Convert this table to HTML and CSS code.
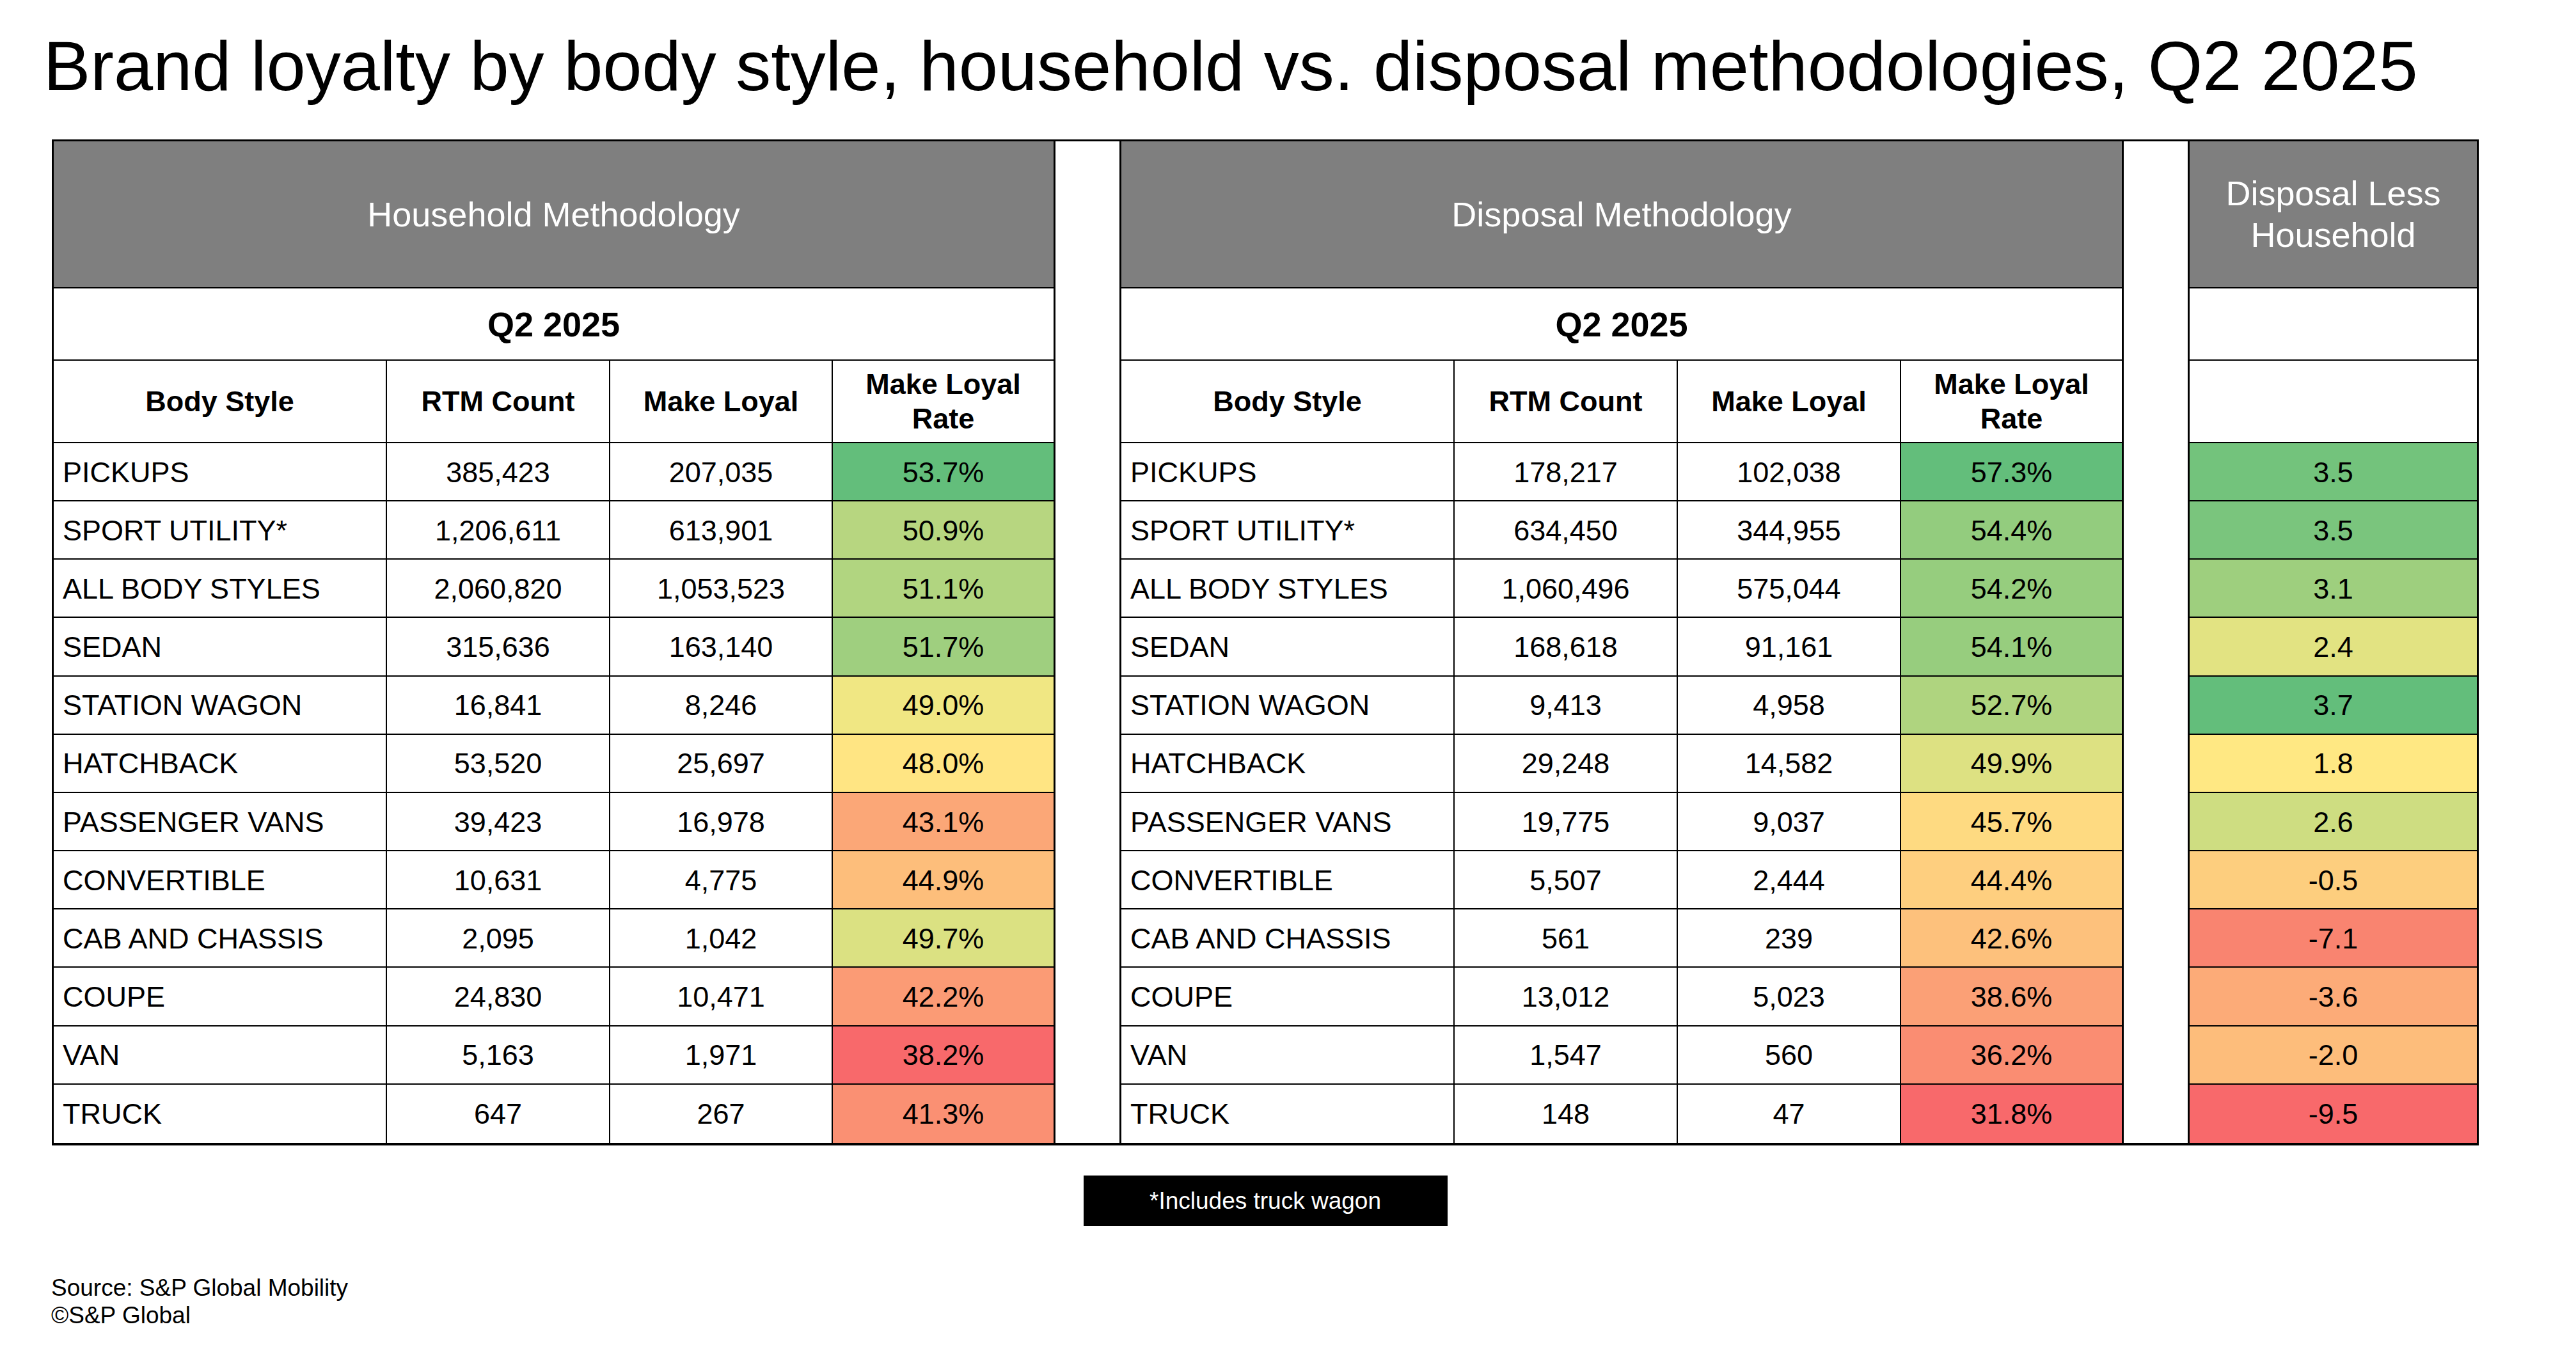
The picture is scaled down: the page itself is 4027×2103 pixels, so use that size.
FILE: index.html
```html
<!DOCTYPE html>
<html lang="en">
<head>
<meta charset="utf-8">
<title>Brand loyalty by body style</title>
<link rel="stylesheet" href="styles.css">
</head>
<body>
<h1 class="title">Brand loyalty by body style, household vs. disposal methodologies, Q2 2025</h1>
<div class="sheet">
  <div class="grid">
    <section class="panel panel-left">
      <div class="band">Household Methodology</div>
      <div class="period">Q2 2025</div>
      <div class="cols"><div class="c">Body Style</div><div class="c">RTM Count</div><div class="c">Make Loyal</div><div class="c">Make Loyal<br>Rate</div></div>
      <div class="rows">
        <div class="row"><div class="c name">PICKUPS</div><div class="c">385,423</div><div class="c">207,035</div><div class="c" style="background:#63be7b">53.7%</div></div>
        <div class="row"><div class="c name">SPORT UTILITY*</div><div class="c">1,206,611</div><div class="c">613,901</div><div class="c" style="background:#b7d680">50.9%</div></div>
        <div class="row"><div class="c name">ALL BODY STYLES</div><div class="c">2,060,820</div><div class="c">1,053,523</div><div class="c" style="background:#b1d580">51.1%</div></div>
        <div class="row"><div class="c name">SEDAN</div><div class="c">315,636</div><div class="c">163,140</div><div class="c" style="background:#9fcf7f">51.7%</div></div>
        <div class="row"><div class="c name">STATION WAGON</div><div class="c">16,841</div><div class="c">8,246</div><div class="c" style="background:#f0e783">49.0%</div></div>
        <div class="row"><div class="c name">HATCHBACK</div><div class="c">53,520</div><div class="c">25,697</div><div class="c" style="background:#ffe583">48.0%</div></div>
        <div class="row"><div class="c name">PASSENGER VANS</div><div class="c">39,423</div><div class="c">16,978</div><div class="c" style="background:#fba777">43.1%</div></div>
        <div class="row"><div class="c name">CONVERTIBLE</div><div class="c">10,631</div><div class="c">4,775</div><div class="c" style="background:#fdbe7b">44.9%</div></div>
        <div class="row"><div class="c name">CAB AND CHASSIS</div><div class="c">2,095</div><div class="c">1,042</div><div class="c" style="background:#dbe182">49.7%</div></div>
        <div class="row"><div class="c name">COUPE</div><div class="c">24,830</div><div class="c">10,471</div><div class="c" style="background:#fb9b75">42.2%</div></div>
        <div class="row"><div class="c name">VAN</div><div class="c">5,163</div><div class="c">1,971</div><div class="c" style="background:#f8696b">38.2%</div></div>
        <div class="row"><div class="c name">TRUCK</div><div class="c">647</div><div class="c">267</div><div class="c" style="background:#fa9073">41.3%</div></div>
      </div>
    </section>
    <div class="spacer"></div>
    <section class="panel panel-right">
      <div class="band">Disposal Methodology</div>
      <div class="period">Q2 2025</div>
      <div class="cols"><div class="c">Body Style</div><div class="c">RTM Count</div><div class="c">Make Loyal</div><div class="c">Make Loyal<br>Rate</div></div>
      <div class="rows">
        <div class="row"><div class="c name">PICKUPS</div><div class="c">178,217</div><div class="c">102,038</div><div class="c" style="background:#63be7b">57.3%</div></div>
        <div class="row"><div class="c name">SPORT UTILITY*</div><div class="c">634,450</div><div class="c">344,955</div><div class="c" style="background:#93cc7e">54.4%</div></div>
        <div class="row"><div class="c name">ALL BODY STYLES</div><div class="c">1,060,496</div><div class="c">575,044</div><div class="c" style="background:#96cd7e">54.2%</div></div>
        <div class="row"><div class="c name">SEDAN</div><div class="c">168,618</div><div class="c">91,161</div><div class="c" style="background:#97cd7e">54.1%</div></div>
        <div class="row"><div class="c name">STATION WAGON</div><div class="c">9,413</div><div class="c">4,958</div><div class="c" style="background:#afd47f">52.7%</div></div>
        <div class="row"><div class="c name">HATCHBACK</div><div class="c">29,248</div><div class="c">14,582</div><div class="c" style="background:#dde182">49.9%</div></div>
        <div class="row"><div class="c name">PASSENGER VANS</div><div class="c">19,775</div><div class="c">9,037</div><div class="c" style="background:#feda81">45.7%</div></div>
        <div class="row"><div class="c name">CONVERTIBLE</div><div class="c">5,507</div><div class="c">2,444</div><div class="c" style="background:#fecf7f">44.4%</div></div>
        <div class="row"><div class="c name">CAB AND CHASSIS</div><div class="c">561</div><div class="c">239</div><div class="c" style="background:#fdc17c">42.6%</div></div>
        <div class="row"><div class="c name">COUPE</div><div class="c">13,012</div><div class="c">5,023</div><div class="c" style="background:#fba076">38.6%</div></div>
        <div class="row"><div class="c name">VAN</div><div class="c">1,547</div><div class="c">560</div><div class="c" style="background:#fa8d72">36.2%</div></div>
        <div class="row"><div class="c name">TRUCK</div><div class="c">148</div><div class="c">47</div><div class="c" style="background:#f8696b">31.8%</div></div>
      </div>
    </section>
    <div class="spacer"></div>
    <section class="panel panel-diff">
      <div class="band">Disposal Less<br>Household</div>
      <div class="period"></div>
      <div class="cols"><div class="c"></div></div>
      <div class="rows">
        <div class="row"><div class="c" style="background:#73c37c">3.5</div></div>
        <div class="row"><div class="c" style="background:#7ac57d">3.5</div></div>
        <div class="row"><div class="c" style="background:#9ecf7e">3.1</div></div>
        <div class="row"><div class="c" style="background:#e2e382">2.4</div></div>
        <div class="row"><div class="c" style="background:#63be7b">3.7</div></div>
        <div class="row"><div class="c" style="background:#ffe883">1.8</div></div>
        <div class="row"><div class="c" style="background:#cedd81">2.6</div></div>
        <div class="row"><div class="c" style="background:#fdce7e">-0.5</div></div>
        <div class="row"><div class="c" style="background:#f98470">-7.1</div></div>
        <div class="row"><div class="c" style="background:#fcab78">-3.6</div></div>
        <div class="row"><div class="c" style="background:#fdbd7b">-2.0</div></div>
        <div class="row"><div class="c" style="background:#f8696b">-9.5</div></div>
      </div>
    </section>
  </div>
  <div class="note">*Includes truck wagon</div>
</div>
<footer class="source">Source: S&amp;P Global Mobility<br>©S&amp;P Global</footer>
</body>
</html>
```
FILE: styles.css
```css
* { box-sizing: border-box; }

body {
  margin: 0;
  background: #ffffff;
  color: #000000;
  font-family: "Liberation Sans", Arial, sans-serif;
}

.title {
  margin: 0;
  padding: 48px 0 0 68px;
  font-size: 110px;
  line-height: 110px;
  font-weight: 400;
  white-space: nowrap;
}

.sheet {
  width: 3794px;
  margin: 60px 0 0 81px;
}

.grid {
  display: flex;
  border: 3px solid #000;
  border-bottom-width: 4px;
}

.panel {
  display: flex;
  flex-direction: column;
  flex: none;
}

.panel-left { width: 1563px; }
.panel-right { width: 1564px; }
.panel-diff { width: 449px; }

.spacer {
  flex: none;
  width: 106px;
  background: #fff;
  border-left: 3px solid #000;
  border-right: 3px solid #000;
}

.band {
  height: 230px;
  background: #7f7f7f;
  color: #fff;
  border-bottom: 2px solid #000;
  display: flex;
  align-items: center;
  justify-content: center;
  text-align: center;
  font-size: 54px;
  line-height: 65px;
}

.period {
  height: 113px;
  border-bottom: 2px solid #000;
  display: flex;
  align-items: center;
  justify-content: center;
  font-size: 54px;
  font-weight: 700;
}

.cols {
  height: 129px;
  border-bottom: 2px solid #000;
  display: grid;
}

.rows {
  height: 1094px;
  display: grid;
  grid-template-rows: repeat(12, 1fr);
}

.row {
  display: grid;
  border-bottom: 2px solid #000;
}

.row:last-child { border-bottom: 0; }

.panel-left .cols,
.panel-left .row {
  grid-template-columns: 521px 349px 348px 1fr;
}

.panel-right .cols,
.panel-right .row {
  grid-template-columns: 521px 349px 349px 1fr;
}

.panel-diff .cols,
.panel-diff .row {
  grid-template-columns: 1fr;
}

.c {
  display: flex;
  align-items: center;
  justify-content: center;
  text-align: center;
  border-right: 2px solid #000;
  font-size: 45px;
  padding-top: 2px;
  white-space: nowrap;
}

.c:last-child { border-right: 0; }

.cols .c {
  font-weight: 700;
  line-height: 54px;
  padding-top: 0;
}

.name {
  justify-content: flex-start;
  padding-left: 14px;
}

.note {
  width: 569px;
  height: 79px;
  margin: 47px auto 0;
  background: #000;
  color: #fff;
  font-size: 37px;
  display: flex;
  align-items: center;
  justify-content: center;
}

.source {
  margin: 75px 0 0 80px;
  font-size: 37px;
  line-height: 43px;
}
```
